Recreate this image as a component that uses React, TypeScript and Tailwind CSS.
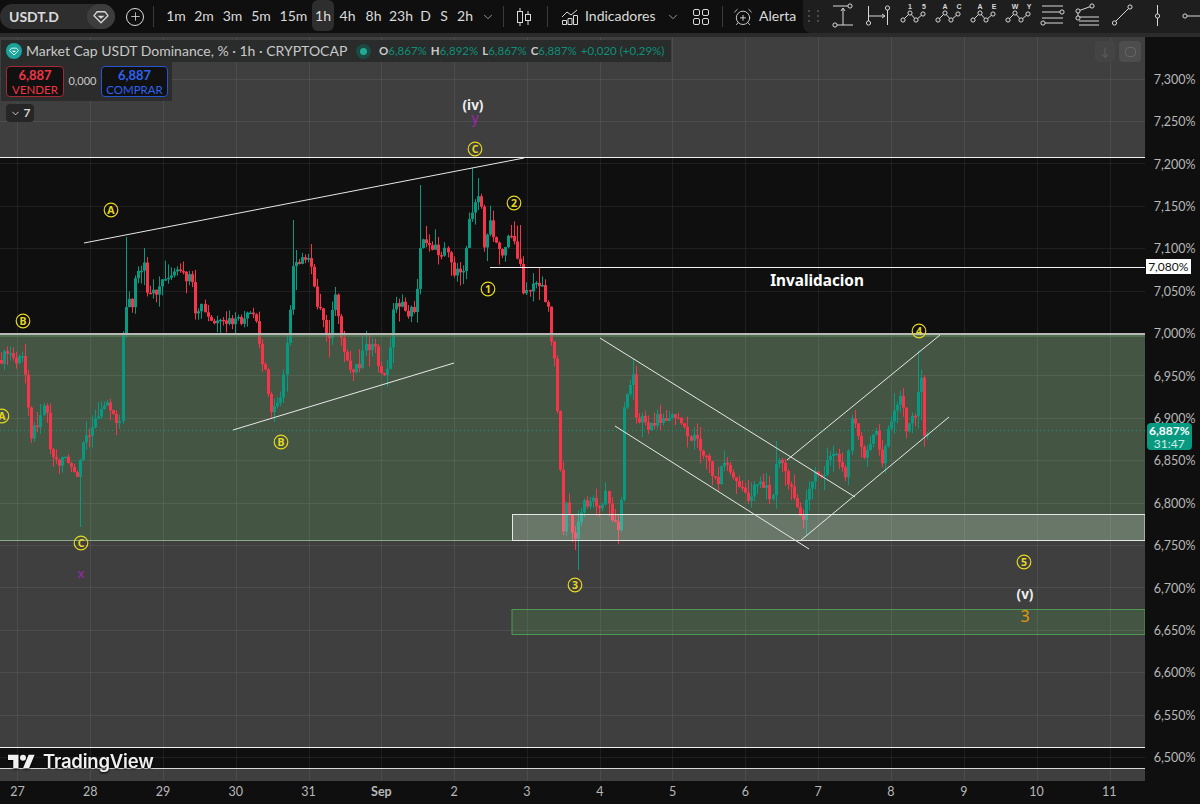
import { AlarmClockPlus, ChevronDown, Plus } from 'lucide-react';

const uiFont = 'font-["Lato",sans-serif]';

// rough price path read off the chart, in page pixels
const path: [number, number][] = [
  [0, 360], [8, 352], [16, 362], [22, 358], [27, 385], [30, 437], [36, 425], [42, 405], [47, 408], [50, 450], [58, 465], [64, 452],
  [70, 470], [78, 478], [84, 440], [92, 425], [100, 415], [107, 397], [115, 420], [119, 420], [122, 338], [127, 300], [132, 305], [135, 275],
  [140, 272], [145, 265], [147, 297], [155, 293], [165, 275], [170, 280], [175, 272], [190, 280], [193, 290], [195, 318],
  [200, 305], [210, 322], [220, 325], [228, 322], [240, 322], [250, 315], [258, 325], [260, 363], [265, 370], [272, 415],
  [280, 395], [287, 340], [293, 270], [300, 263], [305, 255], [312, 273], [316, 300], [322, 315], [328, 340], [335, 293],
  [340, 340], [350, 370], [360, 362], [365, 340], [375, 352], [383, 383], [390, 350], [394, 297], [400, 305], [408, 313], [415, 308],
  [421, 240], [427, 240], [440, 255], [445, 240], [453, 270], [460, 277], [465, 263], [468, 217], [474, 203], [480, 197],
  [484, 243], [490, 225], [495, 245], [502, 253], [510, 230], [516, 255], [520, 260], [523, 290], [530, 290], [535, 285],
  [540, 280], [548, 307], [552, 350], [556, 360], [558, 473], [561, 475], [563, 527], [566, 500], [570, 520], [573, 545], [577, 530],
  [582, 507], [588, 500], [595, 500], [600, 515], [605, 490], [612, 520], [620, 528], [624, 410], [628, 383], [633, 375],
  [634, 410], [638, 430], [643, 408], [647, 430], [652, 425], [655, 418], [665, 420], [675, 415], [680, 420], [683, 430],
  [688, 438], [697, 435], [700, 450], [705, 455], [710, 465], [712, 475], [718, 485], [720, 465], [727, 463], [732, 475],
  [737, 488], [745, 490], [750, 500], [755, 480], [762, 485], [770, 495], [773, 490], [776, 460], [780, 462], [785, 473],
  [790, 490], [797, 502], [803, 520], [807, 500], [810, 487], [815, 470], [820, 480], [825, 473], [828, 457], [835, 453],
  [840, 460], [845, 480], [848, 452], [853, 415], [857, 435], [863, 455], [872, 443], [875, 427], [882, 463], [887, 428],
  [893, 417], [898, 395], [903, 410], [907, 433], [912, 418], [917, 408], [919, 377], [922, 377], [923, 420], [925, 447], [928, 432],
];

// long wicks that noise would not give
const wicks: [number, number, number][] = [
  [81, 470, 527], [127, 237, 330], [293, 220, 290], [421, 185, 260], [473, 168, 220], [578, 510, 570], [632, 358, 400],
  [477, 178, 210], [519, 225, 260], [775, 441, 480], [807, 490, 535], [918, 350, 400], [922, 370, 420], [539, 268, 300], [296, 250, 290],
];

function rnd(n: number) {
  const v = Math.sin(n * 12.9898) * 43758.5453;
  return v - Math.floor(v);
}

function priceAt(x: number) {
  for (let i = 1; i < path.length; i++) {
    if (x <= path[i][0]) {
      const [x0, y0] = path[i - 1];
      const [x1, y1] = path[i];
      return y0 + ((y1 - y0) * (x - x0)) / (x1 - x0 || 1);
    }
  }
  return 430;
}

function buildCandles() {
  const out = [];
  let prev = priceAt(0);
  for (let i = 0; i * 3.0375 + 1 < 929; i++) {
    const x = Math.round(1 + i * 3.0375);
    const close = priceAt(x) + (rnd(i + 1) - 0.5) * 11;
    let top = Math.min(prev, close) - rnd(i + 200) * rnd(i + 600) * 20;
    let bottom = Math.max(prev, close) + rnd(i + 400) * rnd(i + 800) * 20;
    for (const [wx, wt, wb] of wicks) {
      if (Math.abs(wx - x) < 1.6) {
        top = Math.min(top, wt);
        bottom = Math.max(bottom, wb);
      }
    }
    out.push({ x, open: prev, close, top, bottom });
    prev = close;
  }
  return out;
}

const candles = buildCandles();
const gridX = [17, 90, 163, 236, 309, 381, 454, 527, 600, 672, 745, 818, 891, 964, 1037, 1110];
const gridY = [79, 121, 163, 206, 248, 291, 333, 375, 418, 460, 503, 545, 587, 630, 672, 715, 757];
const prices = ['7,300%', '7,250%', '7,200%', '7,150%', '7,100%', '7,050%', '7,000%', '6,950%', '6,900%', '6,850%', '6,800%', '6,750%', '6,700%', '6,650%', '6,600%', '6,550%', '6,500%'];
const days = ['27', '28', '29', '30', '31', 'Sep', '2', '3', '4', '5', '6', '7', '8', '9', '10', '11'];

const intervals = [
  { t: '1m', w: 'w-[28px]' }, { t: '2m', w: 'w-[28px]' }, { t: '3m', w: 'w-[29px]' }, { t: '5m', w: 'w-[28px]' },
  { t: '15m', w: 'w-[37px]' }, { t: '1h', w: 'w-[22px]', on: true }, { t: '4h', w: 'w-[27px]' }, { t: '8h', w: 'w-[25px]' },
  { t: '23h', w: 'w-[30px]' }, { t: 'D', w: 'w-[19px]' }, { t: 'S', w: 'w-[18px]' }, { t: '2h', w: 'w-[24px]' },
];

const lines = [
  [84, 243, 524, 158], [233, 430, 454, 363], [600, 338, 855, 497], [615, 426, 809, 549], [787, 460, 940, 335], [800, 541, 949, 417],
];

const circled = [
  ['A', 111, 210], ['B', 23, 321], ['A', 2, 416], ['C', 81, 543], ['B', 281, 442], ['C', 475, 149],
  ['2', 514, 203], ['1', 488, 289], ['3', 575, 585], ['4', 919, 331], ['5', 1024, 562],
] as const;

function Diamond({ className }: { className?: string }) {
  return (
    <svg viewBox="0 0 18 16" className={className} fill="none" stroke="currentColor" strokeWidth="1.5">
      <path d="M4.5 2h9L17 6.5 9 14.5 1 6.5z" strokeLinejoin="round" />
      <path d="M5 6.5h8L9 10z" fill="currentColor" stroke="none" />
    </svg>
  );
}

function Node({ x, y }: { x: number; y: number }) {
  return <circle cx={x} cy={y} r="2.1" fill="#1e1e1e" />;
}

function ToolIcon({ children }: { children: React.ReactNode }) {
  return (
    <svg width="35" height="32" viewBox="0 0 35 32" fill="none" stroke="#d8d8d8" strokeWidth="1" className="shrink-0">
      {children}
    </svg>
  );
}

function WaveIcon({ a, b }: { a: string; b: string }) {
  return (
    <ToolIcon>
      <path d="M8 20l7-7 6 7 7-6" />
      <Node x={8} y={20} />
      <Node x={15} y={13} />
      <Node x={21} y={20} />
      <Node x={28} y={14} />
      <text x="15" y="9" fontSize="7" fontWeight="700" textAnchor="middle" fill="#d8d8d8" stroke="none" fontFamily="Liberation Sans, sans-serif">{a}</text>
      <text x="29" y="9" fontSize="7" fontWeight="700" textAnchor="middle" fill="#d8d8d8" stroke="none" fontFamily="Liberation Sans, sans-serif">{b}</text>
    </ToolIcon>
  );
}

function DrawingBar() {
  return (
    <div className="ml-auto flex h-[33px] w-[397px] shrink-0 items-start overflow-hidden rounded-bl-lg bg-[#1e1e1e] pl-[5px]">
      <div className="mr-[5px] mt-[10px] grid w-[12px] shrink-0 grid-cols-2 gap-x-[5px] gap-y-[3px]">
        {[0, 1, 2, 3, 4, 5].map((d) => (
          <span key={d} className="h-[2px] w-[2px] bg-[#4a4a4a]" />
        ))}
      </div>
      <ToolIcon>
        <path d="M8 6h17M11 25h17M18 25V9M16 11l2-3 2 3" />
        <Node x={25} y={6} />
        <Node x={10} y={25} />
      </ToolIcon>
      <ToolIcon>
        <path d="M8.500 6v15M8.500 16h16M22 14l3 2-3 2M27.500 10v15" />
        <Node x={8.5} y={23} />
        <Node x={27.5} y={8} />
      </ToolIcon>
      <WaveIcon a="1" b="5" />
      <WaveIcon a="A" b="C" />
      <WaveIcon a="A" b="E" />
      <WaveIcon a="W" b="Y" />
      <ToolIcon>
        <path d="M7 6h21M7 12h19M7 18h21M10 23h18" />
        <Node x={27} y={12} />
        <Node x={8} y={23} />
      </ToolIcon>
      <ToolIcon>
        <path d="M8 18V11l14-5M9 17h20M9 21h20M9 25h20" />
        <Node x={8} y={11} />
        <Node x={8} y={18} />
        <Node x={22} y={6} />
      </ToolIcon>
      <ToolIcon>
        <path d="M9 23L25 7" />
        <Node x={9.5} y={23} />
        <Node x={25} y={7} />
      </ToolIcon>
      <ToolIcon>
        <path d="M17.500 5v21" />
        <Node x={17.500} y={16} />
      </ToolIcon>
      <ToolIcon>
        <path d="M10 16h25" />
        <Node x={10} y={16} />
      </ToolIcon>
    </div>
  );
}

function TopBar() {
  return (
    <header className={`flex h-[33px] shrink-0 items-center bg-[#0f0f0f] text-[14px] text-[#dbdbdb] ${uiFont}`}>
      <div className="flex h-[25px] w-[115px] items-center justify-between rounded-full bg-[#2e2e2e] pl-[9px]">
        <span className="text-[14px] font-bold">USDT.D</span>
        <span className="flex h-[25px] w-[28px] items-center justify-center rounded-full bg-[#3d3d3d]">
          <Diamond className="h-[14px] w-[16px] text-[#d8d8d8]" />
        </span>
      </div>
      <span className="ml-[11px] flex h-[18px] w-[18px] items-center justify-center rounded-full border border-[#dbdbdb]">
        <Plus size={13} strokeWidth={1.5} />
      </span>
      <span className="mx-[9px] h-[21px] w-px bg-[#3a3a3a]" />
      <div className="-ml-px flex h-full">
        {intervals.map((it) => (
          <span key={it.t} className={`flex h-[31px] items-center justify-center rounded-md ${it.w} ${it.on ? 'bg-[#2e2e2e]' : ''}`}>
            {it.t}
          </span>
        ))}
      </div>
      <ChevronDown size={14} strokeWidth={1.5} className="ml-[4px] text-[#aaaaaa]" />
      <span className="ml-[8px] h-[21px] w-px bg-[#3a3a3a]" />
      <svg width="16" height="20" viewBox="0 0 16 20" fill="none" stroke="#dbdbdb" className="ml-[12px]">
        <path d="M4 1v18M12 4v14" />
        <rect x="1.500" y="4.500" width="5" height="11" fill="#0f0f0f" />
        <rect x="9.500" y="7.500" width="5" height="6" fill="#0f0f0f" />
      </svg>
      <span className="ml-[15px] h-[21px] w-px bg-[#3a3a3a]" />
      <svg width="17" height="17" viewBox="0 0 17 17" fill="none" stroke="#dbdbdb" className="ml-[13px]">
        <path d="M1 9l5-5 4 3 6-5" />
        <path d="M1.500 12.500h4v4h-4zM7 10.500h4v6H7zM12.500 7.500h4v9h-4z" />
      </svg>
      <span className="ml-[7px] mb-[2px] w-[67px] whitespace-nowrap text-[14px]">Indicadores</span>
      <ChevronDown size={14} strokeWidth={1.5} className="ml-[14px] text-[#aaaaaa]" />
      <svg width="16" height="16" viewBox="0 0 16 16" fill="none" stroke="#dbdbdb" className="ml-[13px]">
        <rect x="0.500" y="0.500" width="6" height="6" rx="1.500" />
        <rect x="9.500" y="0.500" width="6" height="6" rx="1.500" />
        <rect x="0.500" y="9.500" width="6" height="6" rx="1.500" />
        <rect x="9.500" y="9.500" width="6" height="6" rx="1.500" />
      </svg>
      <span className="ml-[13px] h-[21px] w-px bg-[#3a3a3a]" />
      <AlarmClockPlus size={20} strokeWidth={1.1} className="ml-[10px] shrink-0" />
      <span className="mb-[2px] ml-[6px] text-[14px]">Alerta</span>
      <DrawingBar />
    </header>
  );
}

function ChartCanvas() {
  return (
    <svg viewBox="0 37 1145 744" className="absolute inset-0 h-full w-full">
      <rect x="0" y="37" width="1145" height="744" fill="#3f3f3f" />
      <rect x="0" y="157" width="1145" height="176" fill="#0f0f0f" />
      <rect x="0" y="747" width="1145" height="21" fill="#0f0f0f" />
      <rect x="0" y="335" width="1145" height="205" fill="#445643" />
      <rect x="512" y="609.500" width="633" height="25" fill="#445643" stroke="#4c9a50" />
      <path d="M0 540.500H512" stroke="#8aa88a" />

      {gridX.map((x) => <path key={x} d={`M${x}.5 37V781`} stroke="#ffffff" strokeOpacity="0.07" />)}
      {gridY.map((y) => <path key={y} d={`M0 ${y}.5H1145`} stroke="#ffffff" strokeOpacity="0.07" />)}

      <path d="M0 430.500H1145" stroke="#089981" strokeDasharray="1 3" />

      {candles.map((c) => {
        const up = c.close < c.open;
        const color = up ? '#089981' : '#f7344a';
        const y = Math.min(c.open, c.close);
        return (
          <g key={c.x}>
            <rect x={c.x} y={c.top} width="1" height={c.bottom - c.top} fill={color} />
            <rect x={c.x - 1} y={y} width="3" height={Math.max(Math.abs(c.close - c.open), 1.5)} fill={color} />
          </g>
        );
      })}

      <rect x="512.500" y="514.500" width="632.500" height="26" fill="#ffffff" fillOpacity="0.2" stroke="#e4e8e4" />

      <g stroke="#e8e8e8" strokeWidth="1">
        <path d="M0 157.500H1145" stroke="#f0f0f0" />
        <path d="M0 334H1145" stroke="#b8b8b8" strokeWidth="2" />
        <path d="M0 336H1145" stroke="#5c8a5c" />
        <path d="M490 267.500H1145" stroke="#f0f0f0" />
        <path d="M0 747.500H1145" stroke="#f0f0f0" />
        <path d="M0 768.500H1145" stroke="#d8d8d8" />
        {lines.map(([x1, y1, x2, y2]) => <line key={x1} x1={x1} y1={y1} x2={x2} y2={y2} />)}
      </g>

      <g fontFamily="Noto Sans, sans-serif" textAnchor="middle">
        {circled.map(([t, x, y]) => (
          <g key={`${t}${x}`}>
            <circle cx={x} cy={y} r="6.800" fill="none" stroke="#e6d722" strokeWidth="1.200" />
            <text x={x} y={y + 3.800} fontSize="10.500" fontWeight="700" fill="#e6d722">{t}</text>
          </g>
        ))}
        <text x="473" y="110" fontSize="13.500" fontWeight="700" fill="#f0f0f0">(iv)</text>
        <text x="475" y="123" fontSize="14" fill="#9c27b0">y</text>
        <text x="81" y="578" fontSize="13" fill="#9c27b0">x</text>
        <text x="1025" y="599" fontSize="13.500" fontWeight="700" fill="#f0f0f0">(v)</text>
        <text x="1025" y="622" fontSize="16" fill="#e39a10">3</text>
        <text x="817" y="285.500" fontSize="15.300" fontWeight="700" fill="#ffffff">Invalidacion</text>
      </g>
    </svg>
  );
}

function Legend() {
  return (
    <div className={`absolute left-px top-[3px] ${uiFont}`}>
      <div className="flex h-[22px] w-[670px] items-center bg-[#2a2c2b]">
        <span className="ml-[5px] flex h-[16px] w-[16px] shrink-0 items-center justify-center rounded-full bg-[#1ba39a]">
          <Diamond className="h-[9px] w-[10px] text-white" />
        </span>
        <span className="ml-[4px] w-[323px] shrink-0 whitespace-nowrap text-[14px] leading-none text-[#c9c9c9]">Market Cap USDT Dominance, % · 1h · CRYPTOCAP</span>
        <span className="ml-[7px] flex h-[15px] w-[15px] shrink-0 items-center justify-center rounded-full bg-[#1b4a42]">
          <span className="h-[7px] w-[7px] rounded-full bg-[#22ab94]" />
        </span>
        <span className="ml-[8px] flex gap-[4px] whitespace-nowrap text-[11.500px] leading-none text-[#0b8f79]">
          <span><b className="font-bold text-[#c9c9c9]">O</b>6,867%</span>
          <span><b className="font-bold text-[#c9c9c9]">H</b>6,892%</span>
          <span><b className="font-bold text-[#c9c9c9]">L</b>6,867%</span>
          <span><b className="font-bold text-[#c9c9c9]">C</b>6,887%</span>
          <span>+0,020 (+0,29%)</span>
        </span>
      </div>
      <div className="flex h-[39px] w-[171px] items-center bg-[#2c2c2c] pl-[5px]">
        <div className="flex h-[31px] w-[58px] flex-col items-center justify-center rounded border border-[#a32a35] bg-[#111111] text-[#f23645]">
          <span className="text-[13px] font-bold leading-[15px]">6,887</span>
          <span className="text-[11.500px] leading-[13px]">VENDER</span>
        </div>
        <span className="w-[37px] text-center text-[11px] text-[#c9c9c9]">0,000</span>
        <div className="flex h-[31px] w-[67px] flex-col items-center justify-center rounded border border-[#2555d0] bg-[#111111] text-[#2f62f0]">
          <span className="text-[13px] font-bold leading-[15px]">6,887</span>
          <span className="text-[11.500px] leading-[13px]">COMPRAR</span>
        </div>
      </div>
      <div className="ml-[5px] mt-[3px] flex h-[18px] w-[28px] items-center justify-center gap-[3px] rounded-sm bg-[#262626] text-[12px] font-bold text-[#d8d8d8]">
        <ChevronDown size={11} />
        <span>7</span>
      </div>
    </div>
  );
}

function Logo() {
  return (
    <div className="absolute left-[8px] top-[715px] flex items-center gap-[8px] [filter:drop-shadow(0_1px_1px_#000)]">
      <svg width="27" height="15" viewBox="0 4 36 18" fill="#f0f0f0">
        <path d="M14 22H7V11H0V4h14v18zM28 22h-8l7.500-18h8L28 22z" />
        <circle cx="20" cy="8" r="4" />
      </svg>
      <span className='font-["Inter",sans-serif] text-[18.500px] font-semibold leading-none tracking-[-0.2px] text-[#f0f0f0]'>TradingView</span>
    </div>
  );
}

export default function App() {
  return (
    <div className={`flex h-[804px] w-[1200px] flex-col overflow-hidden bg-[#0f0f0f] ${uiFont}`}>
      <TopBar />
      <div className="h-[4px] shrink-0 bg-[#2b2b2b]" />
      <div className="flex min-h-0 flex-1">
        <div className="flex flex-1 flex-col">
          <main className="relative h-[744px] w-[1145px] overflow-hidden">
            <ChartCanvas />
            <Legend />
            <div className="absolute right-[4px] top-[4px] flex gap-[4px]">
              <span className="flex h-[21px] w-[20px] items-center justify-center rounded bg-[#444444] text-[12px] text-[#5c5c5c]">↓</span>
              <span className="flex h-[21px] w-[22px] items-center justify-center rounded bg-[#4d4d4d]">
                <span className="h-[10px] w-[11px] rounded-sm border border-[#666666]" />
              </span>
            </div>
            <Logo />
          </main>
          <div className="flex h-[23px] text-[12.500px] text-[#b8b8b8]">
            <div className="-ml-[19px] flex">
              {days.map((d) => (
                <span key={d} className={`flex w-[72.800px] items-center justify-center ${d === 'Sep' ? 'font-bold' : ''}`}>{d}</span>
              ))}
            </div>
          </div>
        </div>
        <aside className="relative w-[55px] shrink-0 bg-[#0f0f0f] pt-[22px] text-[12.500px] text-[#b8b8b8]">
          {prices.map((p) => (
            <div key={p} className="flex h-[42.400px] items-center pl-[8px]">{p}</div>
          ))}
          <div className="absolute left-0 top-[222px] flex h-[15px] w-[45px] items-center justify-center bg-white text-[12px] text-[#111111]">7,080%</div>
          <div className="absolute left-px top-[386px] flex h-[27px] w-[45px] flex-col items-center justify-center rounded-sm bg-[#089981] text-[12px] leading-[13px] text-white">
            <span className="font-bold">6,887%</span>
            <span className="text-[#cdeee6]">31:47</span>
          </div>
        </aside>
      </div>
    </div>
  );
}
